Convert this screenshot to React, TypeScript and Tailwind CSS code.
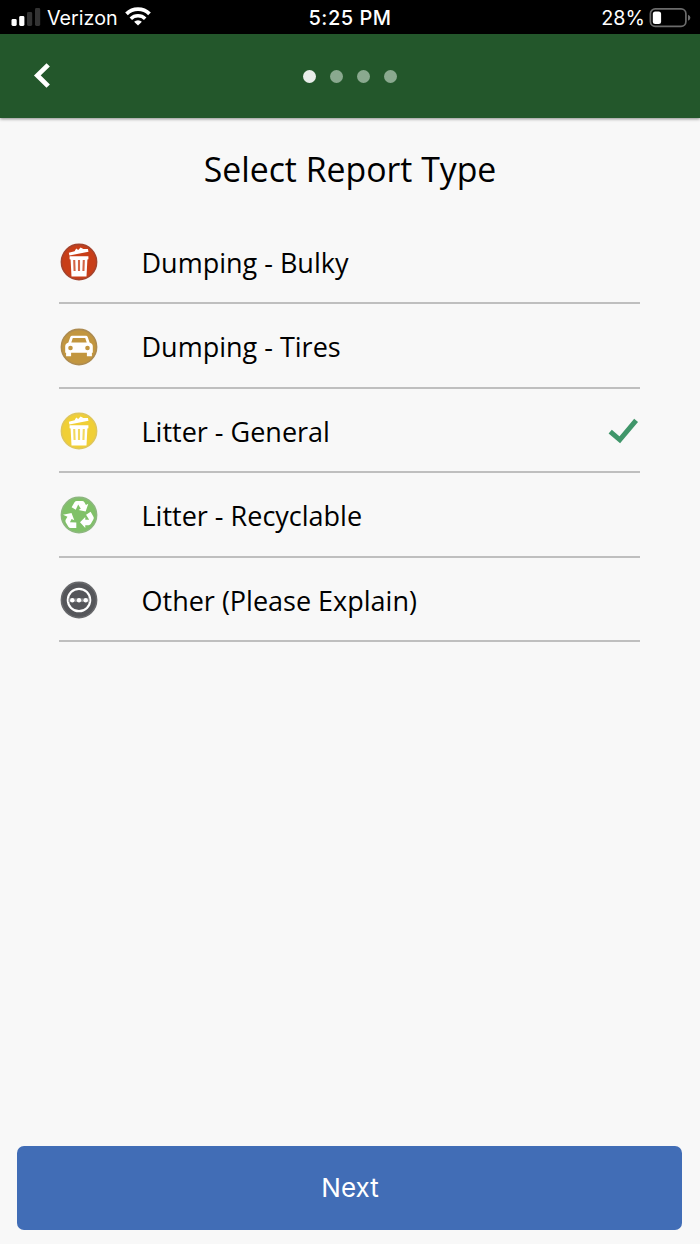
import type { ReactNode } from 'react'

function Badge({ fill, rim, children }: { fill: string; rim: string; children: ReactNode }) {
  return (
    <svg width="38" height="38" viewBox="0 0 38 38" className="shrink-0">
      <circle cx="19" cy="19" r="17.6" fill={fill} stroke={rim} strokeWidth="1.6" />
      {children}
    </svg>
  )
}

function Trash({ bar }: { bar: string }) {
  return (
    <>
      <path d="M8.8 9.8 14.6 8.2 16.2 5.6 18.2 7 20.6 4.6 23.4 6 27.9 5.9 28.5 8.8 9.4 12.6z" fill="#fff" />
      <path d="M9.6 13.2h18.8v3l-1 .4-.9 17H11.5l-.9-17-1-.4z" fill="#fff" />
      <path d="M14.2 17l.4 11M19 17v11M23.8 17l-.4 11" stroke={bar} strokeOpacity="0.8" strokeWidth="2.1" fill="none" />
    </>
  )
}

function Car({ color }: { color: string }) {
  return (
    <>
      <path
        d="M12.2 7.8h13.6q1.5 0 2 1.4l1.8 5.4q3.2 1.2 3.2 3.6v6.5h-.9v3.6h-5v-3.6H11.1v3.6h-5v-3.6h-.9v-6.5q0-2.4 3.2-3.6l1.8-5.4q.5-1.4 2-1.4z"
        fill="#fff"
      />
      <path d="M12.8 10h12.4l1.5 4.4H11.3z" fill={color} />
      <circle cx="10.5" cy="20" r="2.3" fill={color} />
      <circle cx="27.5" cy="20" r="2.3" fill={color} />
    </>
  )
}

function Recycle() {
  return (
    <g fill="#fff" transform="translate(19 18.4) scale(1.12) translate(-19 -19)">
      <path d="M12.4 12.6 15 8.2q.7-1.2 2.1-1.2h4.7q1.3 0 2 1.2l1.4 2.4 2.1-1.1-2.4 7-6.3-1.5 2-1.1-2.3-3.8-2.2 4.8z" />
      <path d="M29.4 16.6 31.9 21q.7 1.2 0 2.4l-2.3 4q-.7 1.2-2.1 1.2h-2.9v2.6l-4.7-5.1 4.7-4.8v2.5h3.5l-2.8-4.5z" />
      <path d="M16.6 31.2h-5q-1.4 0-2.1-1.2l-2.4-4.1q-.6-1.2.1-2.4l1.5-2.5-4-1.6 7.6-1.6 2.5 6.4-2.4-1-1.5 2.8 5.7.2z" />
    </g>
  )
}

function Dots() {
  return (
    <>
      <circle cx="19" cy="19" r="11.2" fill="none" stroke="#fff" strokeWidth="2.2" />
      <path d="M8.5 17.4h21v3.6h-21z" fill="#8c8d90" />
      <g fill="#fff">
        <circle cx="12.3" cy="19.2" r="2.2" />
        <circle cx="19" cy="19.2" r="2.2" />
        <circle cx="25.7" cy="19.2" r="2.2" />
      </g>
    </>
  )
}

const reportTypes = [
  { label: 'Dumping - Bulky', icon: <Badge fill="#c83e18" rim="#a4432d"><Trash bar="#c83e18" /></Badge> },
  { label: 'Dumping - Tires', icon: <Badge fill="#c2963f" rim="#ad8b50"><Car color="#c2963f" /></Badge> },
  { label: 'Litter - General', icon: <Badge fill="#f0cf36" rim="#dfc65b"><Trash bar="#f0cf36" /></Badge>, selected: true },
  { label: 'Litter - Recyclable', icon: <Badge fill="#80c168" rim="#8db77f"><Recycle /></Badge> },
  { label: 'Other (Please Explain)', icon: <Badge fill="#55565a" rim="#68696c"><Dots /></Badge> },
]

function StatusBar() {
  return (
    <div className="grid h-[34px] grid-cols-3 items-center bg-black font-['Inter',sans-serif] text-[20px] text-white">
      <div className="flex items-center pl-[11px] pt-px">
        <svg width="30" height="20" viewBox="0 0 30 20">
          <rect x="0.5" y="12" width="5.2" height="7" rx="1.4" fill="#fff" />
          <rect x="8.2" y="9" width="5.2" height="10" rx="1.4" fill="#fff" />
          <rect x="16" y="5" width="5.2" height="14" rx="1.4" fill="#333" />
          <rect x="24" y="1" width="5.2" height="18" rx="1.4" fill="#333" />
        </svg>
        <span className="ml-[6px] w-[70px] whitespace-nowrap pt-[3px] text-[19.7px]">Verizon</span>
        <svg width="26" height="20" viewBox="0 0 26 20" className="ml-[8px]">
          <path d="M1.5 6.9a16.4 16.4 0 0 1 23 0" fill="none" stroke="#fff" strokeWidth="3.8" />
          <path d="M5.8 11.7a10.2 10.2 0 0 1 14.4 0" fill="none" stroke="#fff" strokeWidth="3.5" />
          <path d="M9.1 14.8a5.6 5.6 0 0 1 7.8 0L13 18.6z" fill="#fff" />
        </svg>
      </div>
      <div className="pt-[2px] text-center font-medium tracking-[0.5px]">5:25 PM</div>
      <div className="flex items-center justify-end pr-[9px] pt-px">
        <span className="whitespace-nowrap pt-[3px] text-[19.8px]">28%</span>
        <svg width="42" height="20" viewBox="0 0 42 20" className="ml-[4px]">
          <rect x="1.4" y="0.9" width="35.5" height="17.5" rx="4.8" fill="none" stroke="#6b6b6b" strokeWidth="1.7" />
          <rect x="3.8" y="3.4" width="8.3" height="12.6" rx="2.5" fill="#fff" />
          <path d="M39 6.7q2.4 1 2.4 3t-2.4 3z" fill="#6b6b6b" />
        </svg>
      </div>
    </div>
  )
}

function Header() {
  return (
    <header className="grid h-[84px] grid-cols-3 items-center bg-[#23572b] shadow-[0_1px_3px_rgba(0,0,0,0.45)]">
      <button aria-label="Back" className="ml-[33px] w-5">
        <svg width="20" height="26" viewBox="0 0 20 26">
          <path d="M15.2 1.9 4.4 12.4l10.8 10.7" fill="none" stroke="#fff" strokeWidth="4.8" />
        </svg>
      </button>
      <div className="flex justify-center gap-[14px]">
        <span className="size-[13px] rounded-full bg-[#e9eeea]" />
        <span className="size-[13px] rounded-full bg-[#8aa98f]" />
        <span className="size-[13px] rounded-full bg-[#8aa98f]" />
        <span className="size-[13px] rounded-full bg-[#8aa98f]" />
      </div>
    </header>
  )
}

export default function App() {
  return (
    <div className="flex h-[1244px] w-[700px] flex-col bg-[#f8f8f8] font-['Open_Sans',sans-serif] text-black">
      <StatusBar />
      <Header />
      <main className="flex flex-1 flex-col">
        <h1 className="mt-[28px] text-center text-[33.8px] leading-[46px]">Select Report Type</h1>
        <ul className="ml-[59px] mr-[60px] mt-[28px]">
          {reportTypes.map((type) => (
            <li key={type.label} className="flex h-[84.4px] items-center border-b-2 border-[#bfbfbf] pl-px pt-[2px]">
              {type.icon}
              <span className="ml-[43.5px] flex-1 pt-[2px] text-[27px]">{type.label}</span>
              {type.selected && (
                <svg width="32" height="28" viewBox="0 0 32 28">
                  <path d="M2.2 14.6l9.6 8.2L28.1 3.4" fill="none" stroke="#40966a" strokeWidth="5" />
                </svg>
              )}
            </li>
          ))}
        </ul>
      </main>
      <button className="mb-[14px] ml-[17px] mr-[18px] h-[84px] rounded-[7px] bg-[#416db6] pb-[2px] pl-px font-['Inter',sans-serif] text-[26px] text-white">
        Next
      </button>
    </div>
  )
}
